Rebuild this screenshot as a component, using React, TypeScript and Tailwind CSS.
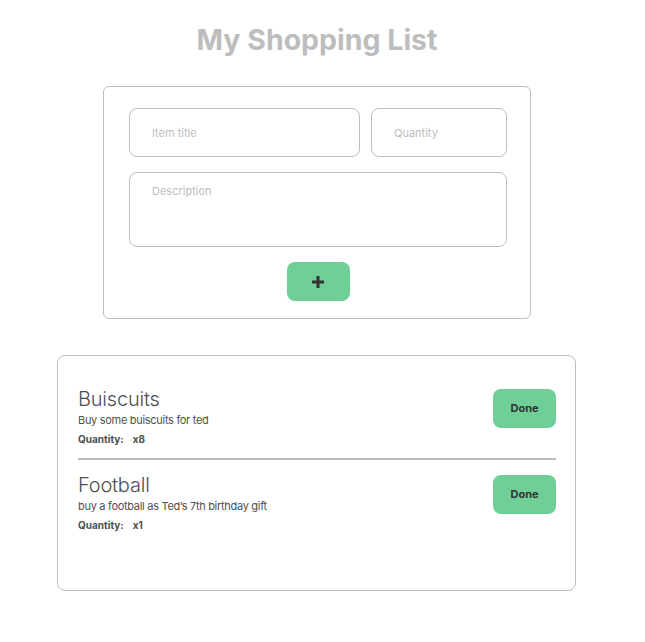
import { useState } from 'react';

interface Item {
  id: number;
  title: string;
  description: string;
  quantity: number;
}

const initialItems: Item[] = [
  { id: 1, title: 'Buiscuits', description: 'Buy some buiscuits for ted', quantity: 8 },
  { id: 2, title: 'Football', description: 'buy a football as Ted’s 7th birthday gift', quantity: 1 },
];

export default function App() {
  const [items] = useState(initialItems);

  return (
    <div
      className="min-h-screen bg-white w-[634px] flex flex-col items-center pt-[23px] text-[#4f4f4f]"
      style={{ fontFamily: 'Inter, "Noto Sans", sans-serif' }}
    >
      <h1 className="text-[28.5px] leading-[34px] font-bold text-[#bdbdbd]">My Shopping List</h1>

      <form
        className="mt-[29px] w-[428px] rounded-[6px] border border-[#bdbdbd] pt-[21px] pb-[17px] pl-[25px] pr-[23px] flex flex-col"
        onSubmit={(e) => e.preventDefault()}
      >
        <div className="flex gap-[11px]">
          <input
            placeholder="Item title"
            className="w-[231px] h-[49px] rounded-[8px] border border-[#bdbdbd] px-[22px] text-[11px] outline-none placeholder:text-[#bdbdbd]"
          />
          <input
            placeholder="Quantity"
            className="w-[136px] h-[49px] rounded-[8px] border border-[#bdbdbd] px-[22px] text-[11px] outline-none placeholder:text-[#bdbdbd]"
          />
        </div>
        <textarea
          placeholder="Description"
          className="mt-[15px] w-[378px] h-[75px] resize-none rounded-[8px] border border-[#bdbdbd] px-[22px] pt-[11px] text-[11px] leading-[14px] outline-none placeholder:text-[#bdbdbd]"
        />
        <button
          type="submit"
          className="mt-[15px] self-center w-[63px] h-[39px] rounded-[8px] bg-[#6fcf97] flex items-center justify-center"
          aria-label="Add item"
        >
          <svg width="14" height="14" viewBox="0 0 14 14">
            <path d="M7 1v12M1 7h12" stroke="#333333" strokeWidth="3" />
          </svg>
        </button>
      </form>

      <div className="mt-[36px] mr-[1px] w-[519px] h-[236px] rounded-[8px] border border-[#bdbdbd] pt-[31px] pl-[20px] pr-[19px]">
        {items.map((item, i) => (
          <div key={item.id}>
            {i > 0 && <div className="h-[2px] bg-[#bdbdbd] mt-[13px] mb-[13px]" />}
            <div className="flex items-start justify-between">
              <div className="flex flex-col">
                <span className="text-[20px] leading-[24px] font-light tracking-[-0.2px]">{item.title}</span>
                <span className="mt-[2px] text-[11px] leading-[14px] tracking-[-0.3px]">{item.description}</span>
                <span className="mt-[6px] text-[10px] leading-[12px] font-bold">
                  Quantity:<span className="ml-[9px]">x{item.quantity}</span>
                </span>
              </div>
              <button className="mt-[2px] w-[63px] h-[39px] rounded-[8px] bg-[#6fcf97] text-[11px] font-bold text-[#333333]">
                Done
              </button>
            </div>
          </div>
        ))}
      </div>
    </div>
  );
}
